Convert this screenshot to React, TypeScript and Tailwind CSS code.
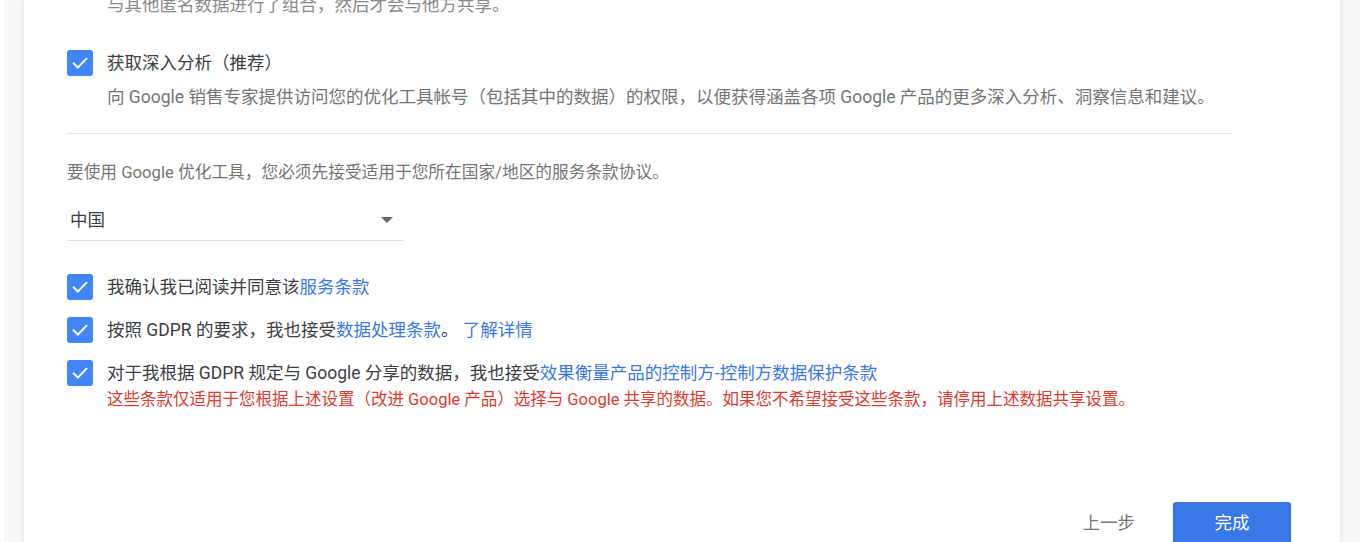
import React from "react";

const FONT = "font-['Roboto','Noto_Sans_CJK_SC',sans-serif]";

function Checkbox() {
  return (
    <span className="flex items-center justify-center w-[26px] h-[26px] rounded-[3px] bg-[#4285f4] flex-shrink-0">
      <svg width="20" height="20" viewBox="0 0 24 24" fill="none">
        <path d="M4.5 12.5l5 5L19.5 7" stroke="#fff" strokeWidth="2.4" strokeLinecap="square" />
      </svg>
    </span>
  );
}

function CheckRow({ children, className = "" }: { children: React.ReactNode; className?: string }) {
  return (
    <div className={`flex items-start gap-[14px] ${className}`}>
      <Checkbox />
      <div className="flex-1">{children}</div>
    </div>
  );
}

const link = "text-[#3b78e7]";

export default function App() {
  return (
    <div className={`h-[542px] overflow-hidden flex bg-[#f6f7f9] ${FONT}`}>
      <div className="w-[4px] bg-white flex-shrink-0" />
      <div className="w-[20px] flex-shrink-0" />
      <div className="flex-1 bg-white shadow-[0_0_5px_rgba(0,0,0,0.12)] pl-[43px] pr-[49px]">
        <div className="flex flex-col -mt-[7px]">
          <p className="pl-[40px] text-[17.5px] leading-[24px] text-[#8a8a8a]">
            与其他匿名数据进行了组合，然后才会与他方共享。
          </p>

          <CheckRow className="mt-[33px]">
            <p className="text-[17.5px] leading-[26px] text-[#3c4043]">获取深入分析（推荐）</p>
            <p className="mt-2 text-[17.5px] leading-[26px] text-[#757575]">
              向 Google 销售专家提供访问您的优化工具帐号（包括其中的数据）的权限，以便获得涵盖各项 Google 产品的更多深入分析、洞察信息和建议。
            </p>
          </CheckRow>

          <div className="mt-[23px] h-px w-[1165px] bg-[#e3e3e3]" />

          <p className="mt-[27px] text-[16.7px] leading-[24px] text-[#757575]">
            要使用 Google 优化工具，您必须先接受适用于您所在国家/地区的服务条款协议。
          </p>

          <div className="mt-[15px] h-[41px] w-[337px] flex items-center justify-between border-b border-[#e0e0e0] pl-[3px] pr-[11px]">
            <span className="text-[17.5px] text-[#3c4043]">中国</span>
            <svg width="12" height="6" viewBox="0 0 12 6">
              <path d="M0 0h12L6 6z" fill="#666" />
            </svg>
          </div>

          <CheckRow className="mt-[33px]">
            <p className="text-[17.5px] leading-[26px] text-[#3c4043]">
              我确认我已阅读并同意该<span className={link}>服务条款</span>
            </p>
          </CheckRow>

          <CheckRow className="mt-[17px]">
            <p className="text-[17.5px] leading-[26px] text-[#3c4043]">
              按照 GDPR 的要求，我也接受<span className={link}>数据处理条款</span>。 <span className={link}>了解详情</span>
            </p>
          </CheckRow>

          <CheckRow className="mt-[17px]">
            <p className="text-[17.5px] leading-[26px] text-[#3c4043]">
              对于我根据 GDPR 规定与 Google 分享的数据，我也接受
              <span className={link}>效果衡量产品的控制方-控制方数据保护条款</span>
            </p>
            <p className="text-[16.5px] leading-[28px] text-[#dd3b2e]">
              这些条款仅适用于您根据上述设置（改进 Google 产品）选择与 Google 共享的数据。如果您不希望接受这些条款，请停用上述数据共享设置。
            </p>
          </CheckRow>

          <div className="mt-[88px] flex items-center justify-end">
            <button type="button" className="mr-[38px] text-[17.5px] text-[#757575]">
              上一步
            </button>
            <button
              type="button"
              className="w-[118px] h-[42px] rounded-[3px] bg-[#3b78e7] text-white text-[17.5px] shadow-[0_1px_2px_rgba(0,0,0,0.2)]"
            >
              完成
            </button>
          </div>
        </div>
      </div>
      <div className="w-[20px] flex-shrink-0" />
    </div>
  );
}
